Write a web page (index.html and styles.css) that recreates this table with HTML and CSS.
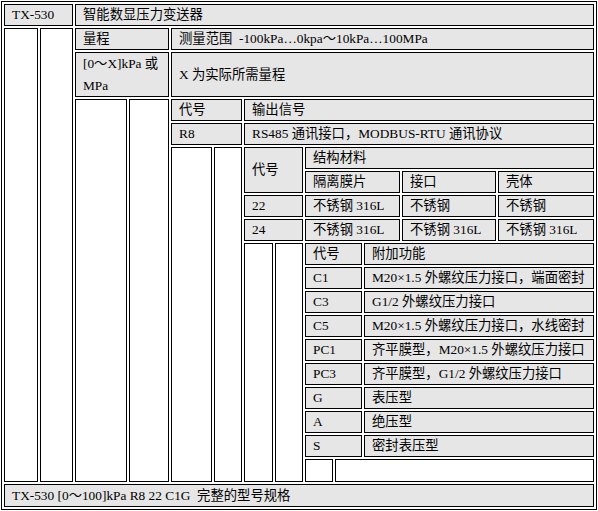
FILE: index.html
```html
<!DOCTYPE html>
<html lang="zh-CN">
<head>
<meta charset="utf-8">
<title>TX-530 智能数显压力变送器</title>
<link rel="stylesheet" href="styles.css">
</head>
<body>
<div class="page">
  <div class="frame">
    <div class="row">
      <div class="cell w-model">TX-530</div>
      <div class="cell grow">智能数显压力变送器</div>
    </div>

    <div class="nest fill">
      <div class="blank w34"></div>
      <div class="blank w33"></div>
      <div class="stack">
        <div class="row">
          <div class="cell w94">量程</div>
          <div class="cell grow">测量范围&nbsp; -100kPa…0kpa～10kPa…100MPa</div>
        </div>
        <div class="row tall">
          <div class="cell w94 wrap">[0～X]kPa 或 MPa</div>
          <div class="cell grow">X 为实际所需量程</div>
        </div>

        <div class="nest fill">
          <div class="blank w52"></div>
          <div class="blank w40"></div>
          <div class="stack">
            <div class="row">
              <div class="cell w71">代号</div>
              <div class="cell grow">输出信号</div>
            </div>
            <div class="row">
              <div class="cell w71">R8</div>
              <div class="cell grow">RS485 通讯接口，MODBUS-RTU 通讯协议</div>
            </div>

            <div class="nest fill">
              <div class="blank w41"></div>
              <div class="blank w28"></div>
              <div class="stack">
                <div class="material">
                  <div class="cell code-span">代号</div>
                  <div class="cell mat-span">结构材料</div>
                  <div class="cell">隔离膜片</div>
                  <div class="cell">接口</div>
                  <div class="cell">壳体</div>
                  <div class="cell">22</div>
                  <div class="cell">不锈钢 316L</div>
                  <div class="cell">不锈钢</div>
                  <div class="cell">不锈钢</div>
                  <div class="cell">24</div>
                  <div class="cell">不锈钢 316L</div>
                  <div class="cell">不锈钢 316L</div>
                  <div class="cell">不锈钢 316L</div>
                </div>

                <div class="nest fill">
                  <div class="blank w29"></div>
                  <div class="blank w28"></div>
                  <div class="stack">
                    <div class="row"><div class="cell w57">代号</div><div class="cell grow">附加功能</div></div>
                    <div class="row"><div class="cell w57">C1</div><div class="cell grow">M20×1.5 外螺纹压力接口，端面密封</div></div>
                    <div class="row"><div class="cell w57">C3</div><div class="cell grow">G1/2 外螺纹压力接口</div></div>
                    <div class="row"><div class="cell w57">C5</div><div class="cell grow">M20×1.5 外螺纹压力接口，水线密封</div></div>
                    <div class="row"><div class="cell w57">PC1</div><div class="cell grow">齐平膜型，M20×1.5 外螺纹压力接口</div></div>
                    <div class="row"><div class="cell w57">PC3</div><div class="cell grow">齐平膜型，G1/2 外螺纹压力接口</div></div>
                    <div class="row"><div class="cell w57">G</div><div class="cell grow">表压型</div></div>
                    <div class="row"><div class="cell w57">A</div><div class="cell grow">绝压型</div></div>
                    <div class="row"><div class="cell w57">S</div><div class="cell grow">密封表压型</div></div>
                    <div class="nest fill">
                      <div class="blank w28"></div>
                      <div class="blank grow"></div>
                    </div>
                  </div>
                </div>
              </div>
            </div>
          </div>
        </div>
      </div>
    </div>

    <div class="row foot">
      <div class="cell grow">TX-530 [0～100]kPa R8 22 C1G&nbsp; 完整的型号规格</div>
    </div>
  </div>
</div>
</body>
</html>
```

FILE: styles.css
```css
html, body {
  margin: 0;
  padding: 0;
  background: #ffffff;
}

.page {
  padding: 1px;
}

.frame {
  box-sizing: border-box;
  width: 596px;
  height: 509px;
  border: 1px solid #000;
  padding: 2px;
  display: flex;
  flex-direction: column;
  gap: 2px;
  font-family: "Liberation Serif", "Noto Sans CJK SC", serif;
  font-size: 13.33px;
  color: #000;
}

.row {
  display: flex;
  gap: 2px;
  height: 22px;
  flex: none;
}

.row.tall {
  height: 45px;
}

.row.foot {
  height: 23px;
}

.cell {
  box-sizing: border-box;
  border: 1px solid #000;
  background: #e6e6e6;
  padding: 0 0 0 7px;
  display: flex;
  align-items: center;
  white-space: nowrap;
  line-height: 20px;
  overflow: hidden;
  flex: none;
}

.cell.wrap {
  white-space: normal;
  line-height: 21.5px;
  align-items: flex-start;
  padding-right: 4px;
}

.grow {
  flex: 1 1 0;
  min-width: 0;
}

.nest {
  display: flex;
  gap: 2px;
  min-height: 0;
}

.fill {
  flex: 1 1 0;
}

.stack {
  flex: 1 1 0;
  min-width: 0;
  display: flex;
  flex-direction: column;
  gap: 2px;
}

.blank {
  box-sizing: border-box;
  border: 1px solid #000;
  background: #ffffff;
  flex: none;
}

.blank.grow {
  flex: 1 1 0;
}

.material {
  display: grid;
  grid-template-columns: 59px 95px 94px 1fr;
  grid-auto-rows: 22px;
  gap: 2px;
  flex: none;
}

.material .cell {
  min-width: 0;
}

.code-span {
  grid-row: span 2;
}

.mat-span {
  grid-column: span 3;
}

.w-model { width: 69px; }
.w34 { width: 34px; }
.w33 { width: 33px; }
.w94 { width: 94px; }
.w52 { width: 52px; }
.w40 { width: 40px; }
.w71 { width: 71px; }
.w41 { width: 41px; }
.w29 { width: 29px; }
.w28 { width: 28px; }
.w57 { width: 57px; }
```
